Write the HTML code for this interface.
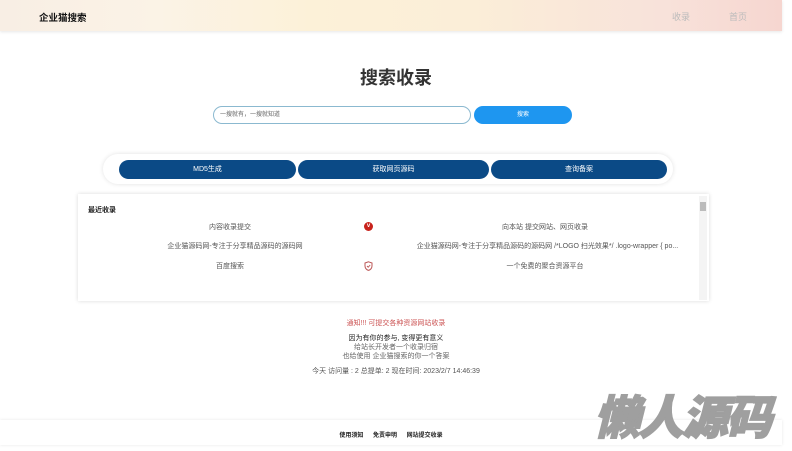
<!DOCTYPE html>
<html><head><meta charset="utf-8"><style>
body{margin:0;width:792px;height:451px;background:#fff;font-family:"Liberation Sans","Noto Sans CJK SC",sans-serif;position:relative;overflow:hidden;font-size:7px;color:#555}
.hdr{position:absolute;left:0;top:0;width:782px;height:31px;background:linear-gradient(90deg,#f8eee4 0%,#fbf3e6 20%,#fcf1d8 40%,#fbeed8 60%,#f8e2da 85%,#f6d6d0 100%);box-shadow:0 1px 3px rgba(0,0,0,.1)}
.abs{position:absolute}
.btn{position:absolute;top:160px;height:19px;background:#0b4a86;color:#fff;border-radius:10px;text-align:center;line-height:19px;font-size:7px}
.row{position:absolute;font-size:7px;color:#555;text-align:center}
</style></head><body>
<div class="hdr"></div>
<div class="abs" style="left:39px;top:10px;font-size:9.5px;font-weight:bold;color:#111">企业猫搜索</div>
<div class="abs" style="left:672px;top:10px;font-size:9px;color:#bbb">收录</div>
<div class="abs" style="left:729px;top:10px;font-size:9px;color:#bbb">首页</div>
<div class="abs" style="left:0;width:792px;top:64px;text-align:center;font-size:18px;font-weight:bold;color:#333">搜索收录</div>
<div class="abs" style="left:213px;top:106px;height:16px;border:1px solid #8bb9d0;border-radius:9px;font-size:6px;color:#666;line-height:16px;padding-left:6px;width:250px">一搜就有，一搜就知道</div>
<div class="abs" style="left:474px;top:106px;width:98px;height:18px;background:#1e96f0;border-radius:9px;color:#fff;font-size:6px;text-align:center;line-height:18px">搜索</div>
<div class="abs" style="left:103px;top:154px;width:570px;height:30px;border-radius:15px;background:#fff;box-shadow:0 0 5px rgba(0,0,0,.12)"></div>
<div class="btn" style="left:119px;width:177px">MD5生成</div>
<div class="btn" style="left:298px;width:191px">获取网页源码</div>
<div class="btn" style="left:491px;width:176px">查询备案</div>
<div class="abs" style="left:78px;top:194px;width:631px;height:107px;background:#fff;box-shadow:0 0 4px rgba(0,0,0,.15)"></div>
<div class="abs" style="left:699px;top:196px;width:8px;height:104px;background:#f4f4f4"></div>
<div class="abs" style="left:700px;top:202px;width:6px;height:9px;background:#bbb"></div>
<div class="abs" style="left:88px;top:205px;font-weight:bold;color:#222">最近收录</div>
<div class="row" style="left:140px;width:180px;top:222px">内容收录提交</div>
<div class="row" style="left:120px;width:230px;top:241px">企业猫源码网-专注于分享精品源码的源码网</div>
<div class="row" style="left:140px;width:180px;top:261px">百度搜索</div>
<div class="abs" style="left:364px;top:222px;width:9px;height:9px;border-radius:50%;background:#c8231c;color:#fff;font-size:6px;text-align:center;line-height:9px;font-weight:bold">v</div>
<svg class="abs" style="left:364px;top:261px" width="9" height="10" viewBox="0 0 9 10"><path d="M4.5 .8 L8 2 V5 C8 7.5 6 9 4.5 9.4 C3 9 1 7.5 1 5 V2 Z" fill="none" stroke="#b55" stroke-width="1"/><path d="M3 5 L4.2 6.2 L6.2 4" fill="none" stroke="#b55" stroke-width=".9"/></svg>
<div class="row" style="left:445px;width:200px;top:222px">向本站 提交网站、网页收录</div>
<div class="row" style="left:400px;width:295px;top:241px;white-space:nowrap">企业猫源码网-专注于分享精品源码的源码网 /*LOGO 扫光效果*/ .logo-wrapper { po...</div>
<div class="row" style="left:445px;width:200px;top:261px">一个免费的聚合资源平台</div>
<div class="abs" style="left:0;width:792px;top:318px;text-align:center;color:#c55">通知!!! 可提交各种资源网站收录</div>
<div class="abs" style="left:0;width:792px;top:334px;text-align:center;color:#222;line-height:9px">因为有你的参与, 变得更有意义<br><span style="color:#666">给站长开发者一个收录归宿<br>也给使用 企业猫搜索的你一个答案</span></div>
<div class="abs" style="left:0;width:792px;top:366px;text-align:center;color:#555">今天 访问量 : 2 总提单: 2 现在时间: 2023/2/7 14:46:39</div>
<div class="abs" style="left:0;top:420px;width:782px;height:25px;background:#fff;box-shadow:0 0 3px rgba(0,0,0,.1)"></div>
<div class="abs" style="left:0;width:782px;top:430px;text-align:center;font-size:6px;color:#222;font-weight:bold;word-spacing:8px">使用须知 免责申明 网站提交收录</div>
<div class="abs" style="left:594px;top:382px;font-size:46px;font-weight:900;color:#9f9f9f;font-style:italic;letter-spacing:-2px;font-family:'Noto Sans CJK SC',sans-serif;-webkit-text-stroke:1.5px #9f9f9f">懒人源码</div>
</body></html>
